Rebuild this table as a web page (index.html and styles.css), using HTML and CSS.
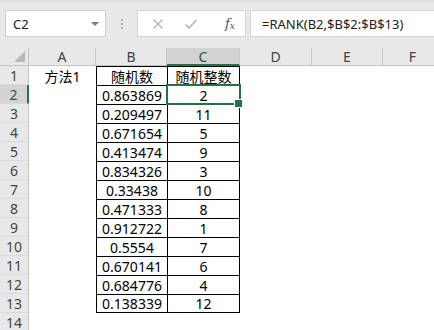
FILE: index.html
```html
<!DOCTYPE html>
<html>
<head>
<meta charset="utf-8">
<link rel="stylesheet" href="styles.css">
</head>
<body>
<div class="toolbar">
  <div class="namebox"><span class="ref">C2</span><span class="caret"></span></div>
  <div class="grip"><i></i><i></i><i></i></div>
  <div class="btnbox">
    <svg class="ico" width="12" height="12" viewBox="0 0 12 12"><path d="M1.5 1.5 L10.5 10.5 M10.5 1.5 L1.5 10.5" stroke="#b4b4b4" stroke-width="1.4" fill="none"/></svg>
    <svg class="ico" width="14" height="12" viewBox="0 0 14 12"><path d="M1.5 6.5 L5 10 L12.5 2" stroke="#b4b4b4" stroke-width="1.6" fill="none"/></svg>
    <span class="fx">f<sub>x</sub></span>
  </div>
  <div class="formula">=RANK(B2,$B$2:$B$13)</div>
</div>
<div class="sheet">
  <div class="corner"><span class="tri"></span></div>
  <div class="ch">A</div><div class="ch">B</div><div class="ch sel">C</div><div class="ch">D</div><div class="ch">E</div><div class="ch">F</div>

  <div class="rh">1</div><div class="c">方法1</div><div class="c t">随机数</div><div class="c t r">随机整数</div><div class="c"></div><div class="c"></div><div class="c"></div>
  <div class="rh sel">2</div><div class="c"></div><div class="c t">0.863869</div><div class="c t r active">2</div><div class="c"></div><div class="c"></div><div class="c"></div>
  <div class="rh">3</div><div class="c"></div><div class="c t">0.209497</div><div class="c t r">11</div><div class="c"></div><div class="c"></div><div class="c"></div>
  <div class="rh">4</div><div class="c"></div><div class="c t">0.671654</div><div class="c t r">5</div><div class="c"></div><div class="c"></div><div class="c"></div>
  <div class="rh">5</div><div class="c"></div><div class="c t">0.413474</div><div class="c t r">9</div><div class="c"></div><div class="c"></div><div class="c"></div>
  <div class="rh">6</div><div class="c"></div><div class="c t">0.834326</div><div class="c t r">3</div><div class="c"></div><div class="c"></div><div class="c"></div>
  <div class="rh">7</div><div class="c"></div><div class="c t">0.33438</div><div class="c t r">10</div><div class="c"></div><div class="c"></div><div class="c"></div>
  <div class="rh">8</div><div class="c"></div><div class="c t">0.471333</div><div class="c t r">8</div><div class="c"></div><div class="c"></div><div class="c"></div>
  <div class="rh">9</div><div class="c"></div><div class="c t">0.912722</div><div class="c t r">1</div><div class="c"></div><div class="c"></div><div class="c"></div>
  <div class="rh">10</div><div class="c"></div><div class="c t">0.5554</div><div class="c t r">7</div><div class="c"></div><div class="c"></div><div class="c"></div>
  <div class="rh">11</div><div class="c"></div><div class="c t">0.670141</div><div class="c t r">6</div><div class="c"></div><div class="c"></div><div class="c"></div>
  <div class="rh">12</div><div class="c"></div><div class="c t">0.684776</div><div class="c t r">4</div><div class="c"></div><div class="c"></div><div class="c"></div>
  <div class="rh">13</div><div class="c"></div><div class="c t b">0.138339</div><div class="c t r b">12</div><div class="c"></div><div class="c"></div><div class="c"></div>
  <div class="rh">14</div><div class="c"></div><div class="c"></div><div class="c"></div><div class="c"></div><div class="c"></div><div class="c"></div>
</div>
</body>
</html>
```

FILE: styles.css
```css
* { box-sizing: border-box; }
html, body { margin: 0; padding: 0; }
body {
  width: 434px;
  height: 330px;
  overflow: hidden;
  background: #fff;
  font-family: "Noto Sans", "Noto Sans CJK SC", sans-serif;
  color: #000;
}
.toolbar {
  height: 48px;
  background: #e8e8e8;
  border-top: 2px solid #dedede;
  display: flex;
  align-items: flex-start;
  padding: 8px 0 0 5px;
  overflow: hidden;
}
.namebox {
  width: 101px;
  height: 27px;
  background: #fff;
  border: 1px solid #cfcfcf;
  display: flex;
  align-items: center;
  justify-content: space-between;
  padding: 0 6px 0 7px;
}
.ref { font-size: 13px; color: #222; }
.caret {
  width: 0; height: 0;
  border-left: 4px solid transparent;
  border-right: 4px solid transparent;
  border-top: 4px solid #7a7a7a;
}
.grip {
  width: 31px;
  height: 27px;
  display: flex;
  flex-direction: column;
  align-items: center;
  justify-content: center;
  gap: 2px;
}
.grip i { display: block; width: 2px; height: 2px; background: #b0b0b0; }
.btnbox {
  width: 109px;
  height: 27px;
  background: #fff;
  border: 1px solid #d6d6d6;
  display: flex;
  align-items: center;
  padding: 0 0 0 14px;
}
.btnbox .ico { display: block; }
.btnbox .ico + .ico { margin-left: 20px; }
.fx {
  margin-left: 27px;
  font-family: "DejaVu Serif", "Liberation Serif", serif;
  font-style: italic;
  font-size: 13px;
  color: #555;
  line-height: 1;
}
.fx sub { font-size: 9px; vertical-align: -1px; }
.formula {
  flex: 1;
  height: 27px;
  margin-left: 4px;
  margin-right: -2px;
  background: #fff;
  border: 1px solid #d6d6d6;
  display: flex;
  align-items: center;
  padding-left: 11px;
  font-size: 13px;
  color: #222;
  white-space: nowrap;
}
.sheet {
  display: grid;
  grid-template-columns: 29px 67px 71px 73px 72px 71px 60px;
  grid-template-rows: 18px;
  grid-auto-rows: 19px;
}
.corner {
  background: #e8e8e8;
  border-right: 1px solid #c4c4c4;
  border-bottom: 1px solid #c4c4c4;
  position: relative;
}
.tri {
  position: absolute;
  right: 3px;
  bottom: 3px;
  width: 0; height: 0;
  border-left: 11px solid transparent;
  border-bottom: 11px solid #b9b9b9;
}
.ch {
  background: #e8e8e8;
  border-right: 1px solid #c9c9c9;
  border-bottom: 1px solid #c4c4c4;
  display: flex;
  align-items: center;
  justify-content: center;
  font-size: 14px;
  color: #444;
}
.ch.sel {
  background: #d3d3d3;
  border-bottom: 2px solid #217346;
  color: #1f5c38;
}
.rh {
  background: #e8e8e8;
  border-right: 1px solid #c4c4c4;
  border-bottom: 1px solid #dadada;
  display: flex;
  align-items: center;
  justify-content: center;
  font-size: 14px;
  color: #444;
}
.rh.sel {
  background: #d3d3d3;
  border-right: 2px solid #217346;
  color: #1f5c38;
}
.c {
  display: flex;
  align-items: center;
  justify-content: center;
  font-size: 14px;
  white-space: nowrap;
}
.c.t { border-top: 1px solid #000; border-left: 1px solid #000; }
.c.r { border-right: 1px solid #000; }
.c.b { border-bottom: 1px solid #000; }
.active { position: relative; }
.active::after {
  content: "";
  position: absolute;
  left: -2px; top: -2px; right: -2px; bottom: -1px;
  border: 2px solid #217346;
}
.active::before {
  content: "";
  position: absolute;
  right: -4px; bottom: -4px;
  width: 7px; height: 7px;
  background: #217346;
  border: 1px solid #fff;
  z-index: 1;
}
```
